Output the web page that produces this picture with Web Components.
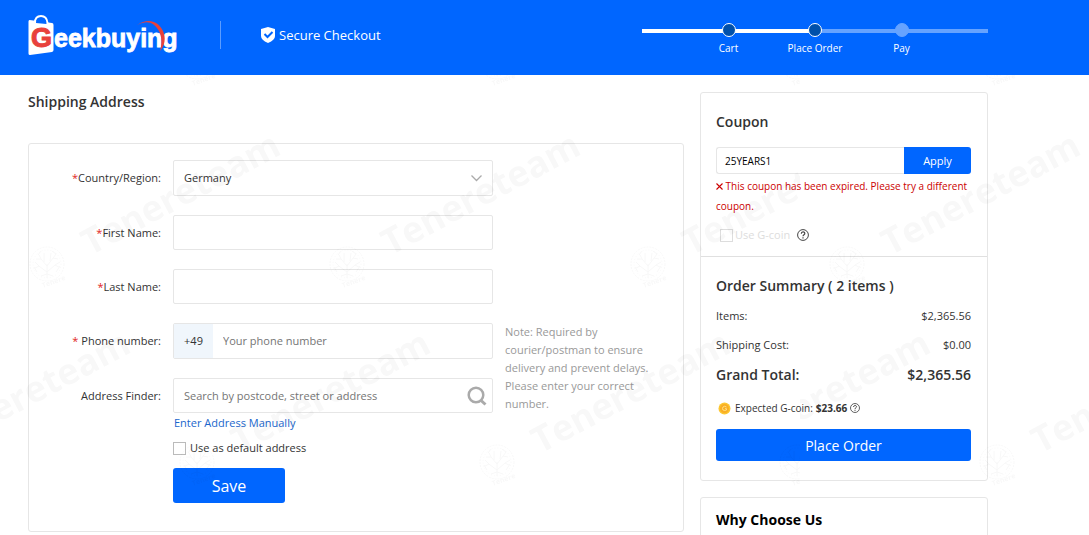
<!DOCTYPE html>
<html lang="en">
<head>
<meta charset="utf-8">
<title>Secure Checkout</title>
<style>
    body {
        margin: 0;
        background: #fff;
        color: #333;
        font: 11px/18px "Open Sans", sans-serif;
    }
</style>
</head>
<body>
<checkout-page></checkout-page>

<script>
function render(host, html) {
    const template = document.createElement("template");
    template.innerHTML = html;
    host.attachShadow({ mode: "open" }).appendChild(template.content.cloneNode(true));
}

class SiteLogo extends HTMLElement {
    constructor() {
        super();
        render(this, `
            <style>
                :host { display: block; }
                a, svg { display: block; }
                svg { overflow: visible; }
                text { font-family: "Liberation Sans", sans-serif; font-weight: bold; }
            </style>
            <a href="#" aria-label="Geekbuying home">
                <svg width="152" height="42" viewBox="0 0 152 42">
                    <path d="M7 9C7 4 9.500 2 13 2s6 2 6.500 7" fill="none" stroke="#fff" stroke-width="2"/>
                    <path d="M1.500 6L24 9q1.500 0 1.500 2v25q0 1.500-1.500 2L2 41q-1.500 0-1.500-1.500V7.500Q.500 6 1.500 6z" fill="#fff"/>
                    <path d="M8 9C8 5 9.500 4 13 4s5 1 5.500 6" fill="#06f"/>
                    <text x="3" y="33" font-size="27" fill="#e8413c" stroke="#e8413c">G</text>
                    <text x="26" y="33" font-size="25" fill="#fff" stroke="#fff" stroke-width=".8">eekbuying</text>
                    <path d="M109 11C119 4 130 6 135 17c3 7 2 14-3 20 2-7 2-14-1-20-5-9-12-11-22-6z" fill="#e8413c"/>
                </svg>
            </a>
        `);
    }
}

class ProgressSteps extends HTMLElement {
    constructor() {
        super();
        render(this, `
            <style>
                :host {
                    display: block;
                    width: 346px;
                    background: linear-gradient(to right, #fff 50%, #66a3ff 50%) 0 6px / 100% 4px no-repeat;
                }
                ol {
                    display: grid;
                    grid-template-columns: repeat(3, 1fr);
                    margin: 0 12.5%;
                    padding: 0;
                    list-style: none;
                    text-align: center;
                    font-size: 10px;
                    line-height: 14px;
                }
                li::before {
                    content: "";
                    display: block;
                    box-sizing: border-box;
                    width: 14px;
                    height: 14px;
                    margin: 0 auto 4px;
                    border: 1px solid #fff;
                    border-radius: 50%;
                    background: #0050aa;
                }
                li.todo::before {
                    border-color: #66a3ff;
                    background: #66a3ff;
                }
            </style>
            <ol>
                <li>Cart</li>
                <li aria-current="step">Place Order</li>
                <li class="todo">Pay</li>
            </ol>
        `);
    }
}

class CheckoutHeader extends HTMLElement {
    constructor() {
        super();
        render(this, `
            <style>
                :host {
                    display: flex;
                    align-items: center;
                    box-sizing: border-box;
                    min-height: 75px;
                    padding: 0 101px 5px 28px;
                    background: #06f;
                    color: #fff;
                }
                .secure {
                    display: flex;
                    align-items: center;
                    gap: 4px;
                    margin-left: 40px;
                    padding: 5px 0 5px 40px;
                    border-left: 1px solid #5c9dff;
                    font-size: 13px;
                }
                progress-steps { margin: 8px 0 0 auto; }
            </style>
            <site-logo></site-logo>
            <div class="secure">
                <svg width="14" height="16" viewBox="0 0 14 16">
                    <path d="M7 0l7 2v7q0 4-7 7-7-3-7-7V2z" fill="#fff"/>
                    <path d="M3.500 7l3 3 5-5" fill="none" stroke="#06f" stroke-width="2"/>
                </svg>
                Secure Checkout
            </div>
            <progress-steps></progress-steps>
        `);
    }
}

class FormRow extends HTMLElement {
    constructor() {
        super();
        render(this, `
            <style>
                :host {
                    display: grid;
                    grid-template-columns: 132px 320px 1fr;
                    column-gap: 12px;
                    align-items: center;
                }
                .label { text-align: right; }
                .note {
                    height: 0;
                    align-self: start;
                    max-width: 150px;
                    color: #999;
                }
            </style>
            <div class="label"><slot name="label"></slot></div>
            <div><slot></slot></div>
            <div class="note"><slot name="note"></slot></div>
        `);
    }
}

class ShippingForm extends HTMLElement {
    constructor() {
        super();
        render(this, `
            <style>
                :host { display: block; }
                form {
                    display: flex;
                    flex-direction: column;
                    gap: 19px;
                    padding: 16px 16px 28px 0;
                    border: 1px solid #e6e6e6;
                    border-radius: 3px;
                }
                i { color: #e1251b; font-style: normal; }
                input, select, button { font: inherit; color: inherit; }
                .box {
                    display: flex;
                    box-sizing: border-box;
                    height: 36px;
                    border: 1px solid #e6e6e6;
                    border-radius: 2px;
                    background: #fff;
                }
                .box.short { height: 35px; }
                .box input, select {
                    flex: 1;
                    min-width: 0;
                    margin: 0;
                    padding: 0 10px;
                    border: 0;
                    background: none;
                    outline: none;
                }
                ::placeholder { color: #757575; opacity: 1; }
                .pick { display: grid; align-items: center; }
                .pick > * { grid-area: 1 / 1; }
                select { appearance: none; height: 100%; }
                .pick svg { justify-self: end; margin-right: 10px; pointer-events: none; }
                .code {
                    display: flex;
                    align-items: center;
                    justify-content: center;
                    width: 39px;
                    background: #f0f6fc;
                }
                .search {
                    display: flex;
                    align-items: center;
                    padding: 0 5px;
                    border: 0;
                    background: none;
                }
                .actions {
                    display: flex;
                    flex-direction: column;
                    align-items: flex-start;
                    gap: 7px;
                    margin: -18px 0 0 144px;
                }
                a { color: #1a66cc; text-decoration: none; margin-left: 1px; }
                .default { display: flex; align-items: center; gap: 4px; }
                .default input {
                    appearance: none;
                    width: 13px;
                    height: 13px;
                    margin: 0;
                    border: 1px solid #bbb;
                    background: #fff;
                }
                .save {
                    width: 112px;
                    height: 35px;
                    margin-top: 4px;
                    border: 0;
                    border-radius: 3px;
                    background: #06f;
                    color: #fff;
                    font-size: 16px;
                }
            </style>
            <form>
                <form-row>
                    <label slot="label" for="country"><i>*</i>Country/Region:</label>
                    <div class="box pick">
                        <select id="country"><option>Germany</option></select>
                        <svg width="11" height="7" viewBox="0 0 11 7"><path d="M.500.500l5 5 5-5" fill="none" stroke="#aaa" stroke-width="1.300"/></svg>
                    </div>
                </form-row>
                <form-row>
                    <label slot="label" for="first"><i>*</i>First Name:</label>
                    <div class="box short"><input id="first" type="text"></div>
                </form-row>
                <form-row>
                    <label slot="label" for="last"><i>*</i>Last Name:</label>
                    <div class="box short"><input id="last" type="text"></div>
                </form-row>
                <form-row>
                    <label slot="label" for="phone"><i>*</i> Phone number:</label>
                    <div class="box"><span class="code">+49</span><input id="phone" type="tel" placeholder="Your phone number"></div>
                    <span slot="note">Note: Required by courier/postman to ensure delivery and prevent delays. Please enter your correct number.</span>
                </form-row>
                <form-row>
                    <label slot="label" for="finder">Address Finder:</label>
                    <div class="box short">
                        <input id="finder" type="text" placeholder="Search by postcode, street or address">
                        <button class="search" type="button" aria-label="Search">
                            <svg width="20" height="20" viewBox="0 0 20 20" fill="none" stroke="#aaa">
                                <circle cx="9" cy="9" r="7.300" stroke-width="2.500"/>
                                <path d="M13.500 14l5 4.500" stroke-width="3"/>
                            </svg>
                        </button>
                    </div>
                </form-row>
                <div class="actions">
                    <a href="#">Enter Address Manually</a>
                    <label class="default"><input type="checkbox">Use as default address</label>
                    <button class="save" type="button">Save</button>
                </div>
            </form>
        `);
    }
}

class HelpIcon extends HTMLElement {
    constructor() {
        super();
        render(this, `
            <style>
                :host { display: inline-block; width: 12px; height: 12px; }
                svg { display: block; width: 100%; height: 100%; }
            </style>
            <svg viewBox="0 0 12 12" fill="none" stroke="#444">
                <circle cx="6" cy="6" r="5.400"/>
                <path d="M4.300 4.800c0-2.400 3.500-2.400 3.500-.3C7.800 5.800 6 5.700 6 7.300M6 8.200v1.200" stroke-width="1.200"/>
            </svg>
        `);
    }
}

class CouponBox extends HTMLElement {
    constructor() {
        super();
        render(this, `
            <style>
                :host { display: block; padding: 19px 16px 12px 15px; }
                h2 { margin: 0 0 15px; font-size: 14px; line-height: 20px; font-weight: 600; }
                .entry { display: flex; height: 27px; }
                .entry input {
                    flex: 1;
                    min-width: 0;
                    box-sizing: border-box;
                    margin: 0;
                    padding: 0 8px;
                    border: 1px solid #e6e6e6;
                    border-right: 0;
                    border-radius: 3px 0 0 3px;
                    color: #000;
                    font: 10px "Open Sans", sans-serif;
                }
                button {
                    width: 67px;
                    border: 0;
                    border-radius: 0 3px 3px 0;
                    background: #06f;
                    color: #fff;
                    font: 11px "Open Sans", sans-serif;
                }
                .error { margin: 2px 0 10px; color: #c00; font-size: 10px; line-height: 20px; }
                .coin { display: flex; align-items: center; gap: 7px; }
                label { display: flex; align-items: center; gap: 2px; margin-left: 4px; color: #ddd; }
                label input {
                    appearance: none;
                    width: 13px;
                    height: 13px;
                    margin: 0;
                    border: 1px solid #ddd;
                }
            </style>
            <h2>Coupon</h2>
            <div class="entry">
                <input type="text" value="25YEARS1" aria-label="Coupon code">
                <button type="button">Apply</button>
            </div>
            <p class="error">
                <svg width="7" height="7" viewBox="0 0 7 7"><path d="M.500.500l6 6m0-6l-6 6" stroke="#c00" stroke-width="1.100"/></svg>
                This coupon has been expired. Please try a different coupon.
            </p>
            <div class="coin">
                <label><input type="checkbox" disabled>Use G-coin</label>
                <help-icon></help-icon>
            </div>
        `);
    }
}

class OrderSummary extends HTMLElement {
    constructor() {
        super();
        render(this, `
            <style>
                :host { display: block; padding: 19px 16px 19px 15px; border-top: 1px solid #e0e0e0; }
                h2 { margin: 0 0 11px; font-size: 14px; line-height: 20px; font-weight: 600; }
                dl { margin: 0; }
                dl div { display: flex; justify-content: space-between; margin-bottom: 11px; }
                dd { margin: 0; }
                .total { font-size: 14px; line-height: 20px; font-weight: 600; }
                .coin { display: flex; align-items: center; gap: 3px; margin: 14px 0 12px 2px; font-size: 10px; }
                .coin > svg { margin-right: 1px; }
                .coin help-icon { width: 10px; height: 10px; }
                dl .total { margin-bottom: 0; }
                button {
                    display: block;
                    width: 100%;
                    height: 32px;
                    border: 0;
                    border-radius: 3px;
                    background: #06f;
                    color: #fff;
                    font: 14px "Open Sans", sans-serif;
                }
            </style>
            <h2>Order Summary ( 2 items )</h2>
            <dl>
                <div><dt>Items:</dt><dd>$2,365.56</dd></div>
                <div><dt>Shipping Cost:</dt><dd>$0.00</dd></div>
                <div class="total"><dt>Grand Total:</dt><dd>$2,365.56</dd></div>
            </dl>
            <div class="coin">
                <svg width="13" height="13" viewBox="0 0 13 13">
                    <circle cx="6.500" cy="6.500" r="6" fill="#fcc630"/>
                    <circle cx="6.500" cy="6.500" r="4.500" fill="#f9ae25"/>
                    <path d="M8.500 5q-2-1.500-3.500 0-1 1.500 0 3 2 1 3.500 0V6.700H7" fill="none" stroke="#ffe082"/>
                </svg>
                <span>Expected G-coin:</span>
                <b>$23.66</b>
                <help-icon></help-icon>
            </div>
            <button type="button">Place Order</button>
        `);
    }
}

class SideCard extends HTMLElement {
    constructor() {
        super();
        render(this, `
            <style>
                :host { display: block; border: 1px solid #e6e6e6; border-radius: 3px; }
            </style>
            <slot></slot>
        `);
    }
}

class PageWatermark extends HTMLElement {
    constructor() {
        super();
        // Each tile is cropped at its own edge, the second starts at x = 800
        const tile = [
            [-103, 62], [197, 62], [497, 62], [797, 62],
            [47, 264], [347, 264], [648, 264],
            [-103, 462], [197, 462], [497, 462], [797, 462],
        ];
        const marks = tile.map(([x, y]) => `<use href="#mark" x="${x}" y="${y}"/>`).join("");
        render(this, `
            <style>
                :host {
                    position: absolute;
                    inset: 0;
                    overflow: hidden;
                    pointer-events: none;
                }
                text { font-family: "Open Sans", sans-serif; font-weight: bold; }
            </style>
            <svg width="100%" height="100%" aria-hidden="true">
                <defs>
                    <g id="mark">
                        <text transform="translate(43 -8) rotate(-28)" font-size="36">Tenereteam</text>
                        <g fill="none" stroke="#000">
                            <circle r="17" stroke-dasharray="2 1"/>
                            <circle r="14" stroke-dasharray="1 2"/>
                            <path d="M0 14V0M0 8l-8-6-4 2M0 8l8-7 4 2M0 2l-6-7-5 0M0 2l6-8 5 1M-3-2l0-9M3-3l1-8M-8 2l-4-4M8 1l5-3M-6-5l-2-4M6-6l3-4M-6 12l6-2 6 2M-13 3l3 5M13 2l-4 6M-9-9l3-4M9-10l-4-3"/>
                        </g>
                        <text transform="translate(-4 24) rotate(-20)" font-size="7">Tenere</text>
                    </g>
                </defs>
                <svg width="800" height="600" opacity=".03">${marks}</svg>
                <svg x="800" width="800" height="600" opacity=".03">${marks}</svg>
            </svg>
        `);
    }
}

class CheckoutPage extends HTMLElement {
    constructor() {
        super();
        render(this, `
            <style>
                :host { display: block; position: relative; overflow: hidden; height: 100vh; }
                checkout-header { position: relative; z-index: 1; }
                main {
                    display: grid;
                    grid-template-columns: 1fr 288px;
                    gap: 16px;
                    align-items: start;
                    padding: 17px 101px 0 28px;
                }
                h1 { margin: 0 0 31px; font-size: 14px; line-height: 20px; font-weight: 600; }
                aside { display: grid; gap: 16px; }
                h2 { margin: 12px 15px 16px; color: #000; font-size: 14px; line-height: 20px; }
            </style>
            <checkout-header></checkout-header>
            <main>
                <section>
                    <h1>Shipping Address</h1>
                    <shipping-form></shipping-form>
                </section>
                <aside>
                    <side-card>
                        <coupon-box></coupon-box>
                        <order-summary></order-summary>
                    </side-card>
                    <side-card>
                        <h2>Why Choose Us</h2>
                    </side-card>
                </aside>
            </main>
            <page-watermark></page-watermark>
        `);
    }
}

customElements.define("site-logo", SiteLogo);
customElements.define("progress-steps", ProgressSteps);
customElements.define("checkout-header", CheckoutHeader);
customElements.define("form-row", FormRow);
customElements.define("shipping-form", ShippingForm);
customElements.define("help-icon", HelpIcon);
customElements.define("coupon-box", CouponBox);
customElements.define("order-summary", OrderSummary);
customElements.define("side-card", SideCard);
customElements.define("page-watermark", PageWatermark);
customElements.define("checkout-page", CheckoutPage);
</script>
</body>
</html>
